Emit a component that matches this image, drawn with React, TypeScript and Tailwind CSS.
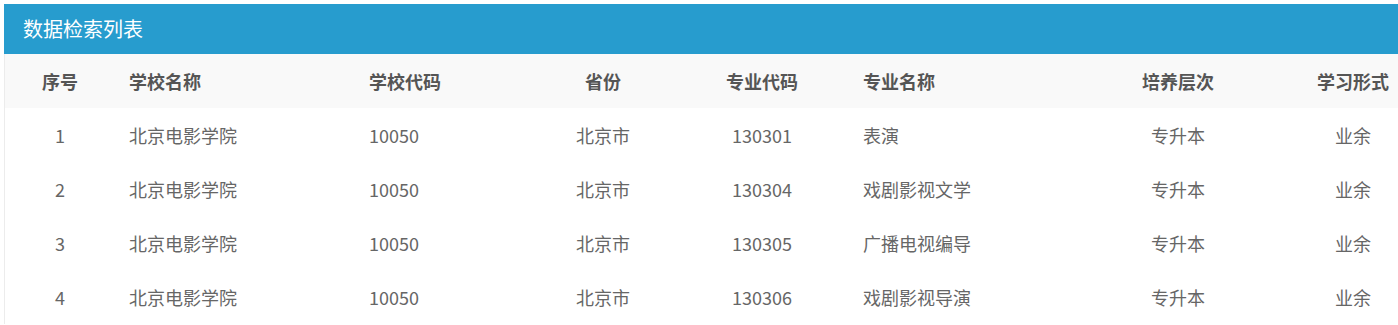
import React from "react";

const rows = [
  ["1", "北京电影学院", "10050", "北京市", "130301", "表演", "专升本", "业余"],
  ["2", "北京电影学院", "10050", "北京市", "130304", "戏剧影视文学", "专升本", "业余"],
  ["3", "北京电影学院", "10050", "北京市", "130305", "广播电视编导", "专升本", "业余"],
  ["4", "北京电影学院", "10050", "北京市", "130306", "戏剧影视导演", "专升本", "业余"],
];

const headers = ["序号", "学校名称", "学校代码", "省份", "专业代码", "专业名称", "培养层次", "学习形式"];

const cellCls = [
  "w-[110px] justify-center",
  "w-[240px] justify-start pl-[14px]",
  "w-[180px] justify-start pl-[14px]",
  "w-[136px] justify-center",
  "w-[182px] justify-center",
  "w-[240px] justify-start pl-[10px]",
  "w-[170px] justify-center",
  "w-[180px] justify-center",
];

export default function App() {
  return (
    <div
      className="w-[1398px] h-[325px] overflow-hidden bg-white pt-[4px] pl-[4px]"
      style={{ fontFamily: '"Noto Sans CJK SC", "Noto Sans", sans-serif' }}
    >
      <div className="h-[50px] bg-[#279cce] flex items-center pl-[19px] text-white text-[20px] w-[1500px]">
        数据检索列表
      </div>
      <div className="border-l border-[#ececec] w-[1500px]">
        <div className="flex h-[54px] bg-[#f9f9f9] text-[#555] font-bold text-[18px]">
          {headers.map((h, i) => (
            <div key={i} className={`flex items-center shrink-0 ${cellCls[i]}`}>
              {h}
            </div>
          ))}
        </div>
        {rows.map((r, ri) => (
          <div key={ri} className="flex h-[54px] text-[#666] text-[18px]">
            {r.map((c, i) => (
              <div key={i} className={`flex items-center shrink-0 ${cellCls[i]}`}>
                {c}
              </div>
            ))}
          </div>
        ))}
      </div>
    </div>
  );
}
